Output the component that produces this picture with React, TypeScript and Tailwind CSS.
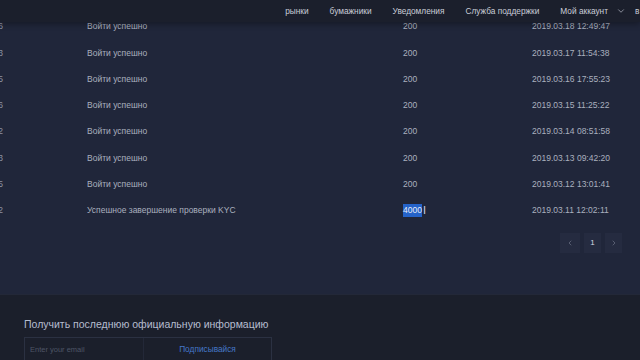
import { ChevronDown, ChevronLeft, ChevronRight } from "lucide-react";

const rows = [
  { ip: "85.140.12.76", msg: "Войти успешно", code: "200", time: "2019.03.18 12:49:47" },
  { ip: "85.140.12.73", msg: "Войти успешно", code: "200", time: "2019.03.17 11:54:38" },
  { ip: "85.140.12.75", msg: "Войти успешно", code: "200", time: "2019.03.16 17:55:23" },
  { ip: "85.140.12.76", msg: "Войти успешно", code: "200", time: "2019.03.15 11:25:22" },
  { ip: "85.140.12.72", msg: "Войти успешно", code: "200", time: "2019.03.14 08:51:58" },
  { ip: "85.140.12.73", msg: "Войти успешно", code: "200", time: "2019.03.13 09:42:20" },
  { ip: "85.140.12.75", msg: "Войти успешно", code: "200", time: "2019.03.12 13:01:41" },
  { ip: "85.140.12.72", msg: "Успешное завершение проверки KYC", code: "4000", time: "2019.03.11 12:02:11" },
];

const nav = ["рынки", "бумажники", "Уведомления", "Служба поддержки"];

export default function App() {
  return (
    <div
      className="relative w-[640px] h-[360px] overflow-hidden bg-[#20263a] text-[#aab0bf]"
      style={{ fontFamily: '"Liberation Sans", Arial, sans-serif' }}
    >
      {/* fixed top bar over the scrolled table */}
      <header className="absolute top-0 left-0 right-0 z-10 h-[22px] bg-[#1b1f2c] shadow-[0_2px_6px_rgba(0,0,0,0.35)] flex items-center justify-end text-[8.3px] text-[#c9cdd8] whitespace-nowrap">
        <nav className="flex items-center">
          {nav.map((n) => (
            <span key={n} className="mr-[21px]">{n}</span>
          ))}
          <span className="flex items-center gap-[8px] mr-[9px]">
            Мой аккаунт
            <ChevronDown size={10} strokeWidth={1.5} />
          </span>
          <span className="w-[5px] overflow-hidden">в</span>
        </nav>
      </header>

      <main className="pt-[13.5px]">
        <div className="ml-[-50px]">
          {rows.map((r, i) => (
            <div key={i} className="h-[26.3px] flex items-center text-[8.5px] whitespace-nowrap">
              <span className="w-[137px] pr-[84px] text-right text-[#8d93a3]">{r.ip}</span>
              <span className="w-[316px]">{r.msg}</span>
              <span className="w-[129px]">
                {r.code === "4000" ? (
                  <span className="inline-flex items-center">
                    <span className="bg-[#2563c9] text-[#e6ecf8]">4000</span>
                    <span className="ml-[1px] text-[#c9d3e8] text-[11px] leading-none font-light">I</span>
                  </span>
                ) : (
                  r.code
                )}
              </span>
              <span>{r.time}</span>
            </div>
          ))}
        </div>

        <div className="flex justify-end gap-[4px] pr-[18px] mt-[9px]">
          <button className="w-[20px] h-[20px] flex items-center justify-center bg-[#252b40] text-[#6f7689]">
            <ChevronLeft size={8} strokeWidth={2} />
          </button>
          <button className="w-[17px] h-[20px] flex items-center justify-center bg-[#252b40] text-[#d4d8e2] text-[8px]">
            1
          </button>
          <button className="w-[17px] h-[20px] flex items-center justify-center bg-[#252b40] text-[#6f7689]">
            <ChevronRight size={8} strokeWidth={2} />
          </button>
        </div>
      </main>

      <footer className="absolute left-0 right-0 top-[294px] bottom-0 bg-[#1b1f2b] border-t border-[#232838] px-[24px] pt-[22px]">
        <h3 className="text-[10.5px] leading-[14px] font-medium text-[#b6bdcf] whitespace-nowrap">
          Получить последнюю официальную информацию
        </h3>
        <div className="mt-[6px] w-[248px] h-[25px] border border-[#2b3142] flex items-stretch text-[7.5px]">
          <div className="w-[119px] border-r border-[#232838] flex items-center pl-[5px] text-[#4e5566]">
            Enter your email
          </div>
          <div className="flex-1 flex items-center justify-center text-[#4577c8] text-[8.3px]">
            Подписывайся
          </div>
        </div>
      </footer>
    </div>
  );
}
